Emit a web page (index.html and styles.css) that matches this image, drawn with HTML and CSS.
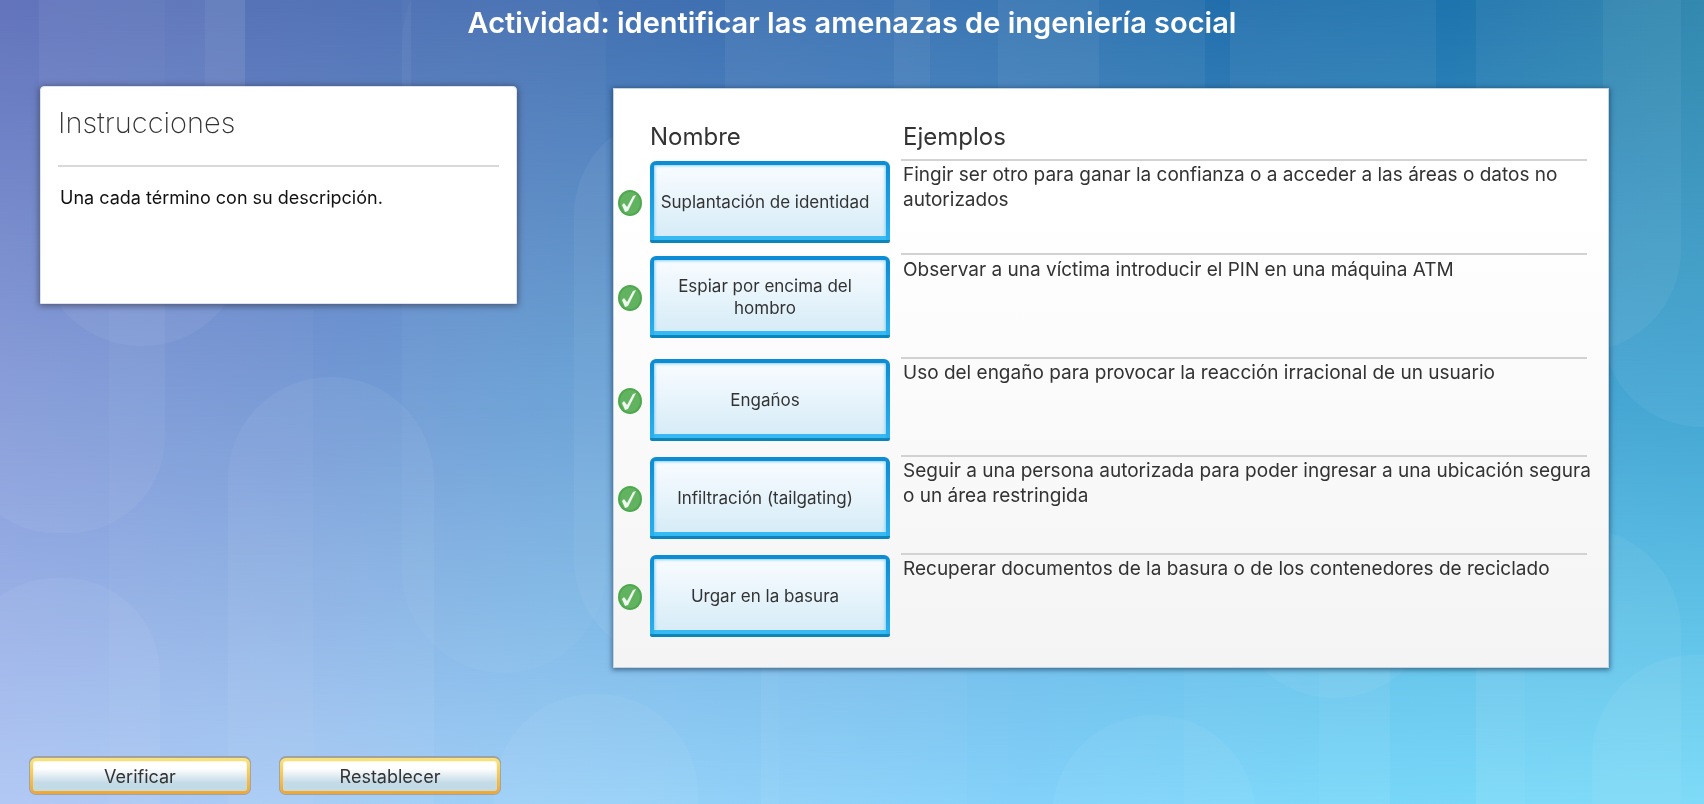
FILE: index.html
```html
<!DOCTYPE html>
<html lang="es">
<head>
<meta charset="utf-8">
<title>Actividad: identificar las amenazas de ingeniería social</title>
<link rel="stylesheet" href="styles.css">
</head>
<body>
<svg class="backdrop" viewBox="0 0 1704 804" preserveAspectRatio="none" aria-hidden="true">
  <defs>
    <linearGradient id="top"><stop offset="0" stop-color="#5b6db9"/><stop offset=".33" stop-color="#4671b2"/><stop offset=".5" stop-color="#386fb2"/><stop offset=".72" stop-color="#226eac"/><stop offset=".85" stop-color="#1e74ae"/><stop offset="1" stop-color="#2983ab"/></linearGradient>
    <linearGradient id="mid"><stop offset="0" stop-color="#849ad8"/><stop offset=".17" stop-color="#7699d5"/><stop offset=".33" stop-color="#6aa2d6"/><stop offset="1" stop-color="#44a7d3"/></linearGradient>
    <linearGradient id="low"><stop offset="0" stop-color="#aec6f4"/><stop offset=".17" stop-color="#a6cbf5"/><stop offset=".33" stop-color="#9ad0f7"/><stop offset=".6" stop-color="#83d1fa"/><stop offset=".78" stop-color="#78d7f9"/><stop offset="1" stop-color="#78d9f8"/></linearGradient>
    <linearGradient id="fadeA" x2="0" y2="1"><stop offset="0" stop-color="#fff" stop-opacity="0"/><stop offset=".5" stop-color="#fff"/></linearGradient>
    <linearGradient id="fadeB" x2="0" y2="1"><stop offset=".5" stop-color="#fff" stop-opacity="0"/><stop offset="1" stop-color="#fff"/></linearGradient>
    <mask id="maskA"><rect width="1704" height="804" fill="url(#fadeA)"/></mask>
    <mask id="maskB"><rect width="1704" height="804" fill="url(#fadeB)"/></mask>
  </defs>
  <rect width="1704" height="804" fill="url(#top)"/>
  <rect width="1704" height="804" fill="url(#mid)" mask="url(#maskA)"/>
  <rect width="1704" height="804" fill="url(#low)" mask="url(#maskB)"/>
  <g fill="#fff" fill-opacity=".05">
    <rect x="39" y="-200" width="206" height="546" rx="102"/>
    <rect x="-40" y="-200" width="205" height="733" rx="96"/>
    <rect x="205" y="-5" width="40" height="200"/>
    <rect x="-40" y="578" width="200" height="400" rx="96"/>
    <rect x="228" y="377" width="206" height="600" rx="102"/>
    <rect x="402" y="-5" width="9" height="200"/>
    <rect x="494" y="694" width="204" height="300" rx="100"/>
    <rect x="574" y="115" width="204" height="545" rx="100"/>
    <rect x="725" y="-5" width="480" height="200"/>
    <rect x="894" y="-5" width="36" height="200"/>
    <rect x="998" y="-5" width="101" height="200"/>
    <rect x="1230" y="-5" width="206" height="200"/>
    <rect x="1476" y="-200" width="205" height="552" rx="102"/>
    <rect x="1603" y="-200" width="200" height="627" rx="98"/>
    <rect x="1476" y="528" width="205" height="400" rx="102"/>
    <rect x="1592" y="655" width="210" height="400" rx="102"/>
    <rect x="1052" y="715" width="204" height="300" rx="102"/>
    <rect x="1232" y="400" width="204" height="298" rx="102"/>
  </g>
  <g fill="#fff" fill-opacity=".03">
    <rect x="109" y="310" width="204" height="500"/>
    <rect x="165" y="-5" width="237" height="200"/>
    <rect x="402" y="-60" width="204" height="733" rx="102"/>
    <rect x="761" y="600" width="18" height="210"/>
    <rect x="761" y="600" width="206" height="210"/>
    <rect x="1184" y="660" width="206" height="150"/>
    <rect x="1319" y="660" width="71" height="150"/>
    <rect x="1476" y="660" width="49" height="150"/>
  </g>
</svg>

<h1 class="title">Actividad: identificar las amenazas de ingeniería social</h1>

<main class="activity">
  <aside class="side">
    <section class="card">
      <h2 class="card-title">Instrucciones</h2>
      <p class="card-text">Una cada término con su descripción.</p>
    </section>
    <div class="actions">
      <button class="action" type="button">Verificar</button>
      <button class="action" type="button">Restablecer</button>
    </div>
  </aside>

  <section class="panel">
    <svg class="symbols" aria-hidden="true">
      <symbol id="check" viewBox="0 0 24 28">
        <ellipse cx="12" cy="14" rx="12" ry="13" fill="#4fa84f"/>
        <ellipse cx="12" cy="14" rx="10" ry="11" fill="#62b360"/>
        <path d="M4 16l2-2 3 4 6-11 3-1-8 16-3 1z" fill="#eef8ee"/>
      </symbol>
    </svg>
    <table class="matches">
      <thead>
        <tr><th class="mark"></th><th class="name" scope="col">Nombre</th><th class="example" scope="col">Ejemplos</th></tr>
      </thead>
      <tbody>
        <tr class="row-short">
          <td class="mark"><svg class="check" role="img" aria-label="Correcto"><use href="#check"/></svg></td>
          <td class="name"><button class="term" type="button">Suplantación de identidad</button></td>
          <td class="example"><p>Fingir ser otro para ganar la confianza o a acceder a las áreas o datos no autorizados</p></td>
        </tr>
        <tr class="row-tall">
          <td class="mark"><svg class="check" role="img" aria-label="Correcto"><use href="#check"/></svg></td>
          <td class="name"><button class="term" type="button">Espiar por encima del hombro</button></td>
          <td class="example"><p>Observar a una víctima introducir el PIN en una máquina ATM</p></td>
        </tr>
        <tr>
          <td class="mark"><svg class="check" role="img" aria-label="Correcto"><use href="#check"/></svg></td>
          <td class="name"><button class="term" type="button">Engaños</button></td>
          <td class="example"><p>Uso del engaño para provocar la reacción irracional de un usuario</p></td>
        </tr>
        <tr>
          <td class="mark"><svg class="check" role="img" aria-label="Correcto"><use href="#check"/></svg></td>
          <td class="name"><button class="term" type="button">Infiltración (tailgating)</button></td>
          <td class="example"><p>Seguir a una persona autorizada para poder ingresar a una ubicación segura o un área restringida</p></td>
        </tr>
        <tr>
          <td class="mark"><svg class="check" role="img" aria-label="Correcto"><use href="#check"/></svg></td>
          <td class="name"><button class="term" type="button">Urgar en la basura</button></td>
          <td class="example"><p>Recuperar documentos de la basura o de los contenedores de reciclado</p></td>
        </tr>
      </tbody>
    </table>
  </section>
</main>
</body>
</html>
```
FILE: styles.css
```css
* { box-sizing: border-box; }

body {
  margin: 0;
  min-height: 100vh;
  display: flex;
  flex-direction: column;
  font-family: Inter, "Liberation Sans", sans-serif;
  color: #333;
}

h1, h2, p { margin: 0; }

.backdrop {
  position: fixed;
  inset: 0;
  width: 100%;
  height: 100%;
  z-index: -1;
}

.title {
  padding: 3px 0 43px;
  font-size: 29px;
  line-height: 40px;
  font-weight: 600;
  text-align: center;
  color: #fff;
}

.activity {
  flex: 1;
  display: grid;
  grid-template-columns: 477fr 996fr;
  gap: 96px;
  padding: 0 95px 10px 40px;
}

.side {
  display: flex;
  flex-direction: column;
  justify-content: space-between;
}

.card {
  min-height: 218px;
  padding: 12px 17px;
  background: #fff;
  border: 1px solid #dde2ee;
  border-radius: 4px 4px 0 0;
  box-shadow: 0 1px 6px 1px rgba(50, 50, 65, .6);
}

.card-title {
  padding-bottom: 18px;
  border-bottom: 2px solid #d9d9d9;
  font-size: 29px;
  line-height: 48px;
  font-weight: 200;
}

.card-text {
  padding: 18px 0 0 2px;
  font-size: 18px;
  line-height: 25px;
  color: #111;
}

.actions {
  display: flex;
  gap: 30px;
  margin: 0 17px 0 -10px;
}

.action {
  flex: 1;
  height: 36px;
  padding: 0;
  border: 3px solid transparent;
  border-radius: 6px;
  background:
    linear-gradient(#fff 0%, #fff 25%, #c4dbe7 72%, #bfdbe6 100%) padding-box,
    linear-gradient(#f8e57e, #eca63b) border-box;
  box-shadow: 0 0 0 1px #a3a3a0, 0 -1px 0 1px #a0a0a0, inset 0 0 2px #f7dd8c;
  font: inherit;
  font-size: 18px;
  color: #333;
}

.panel {
  align-self: start;
  margin-top: 2px;
  padding: 28px 21px 16px 4px;
  background: linear-gradient(#fff 20%, #f4f4f4);
  border: 1px solid #c3d5e2;
  box-shadow: 0 1px 5px 1px rgba(20, 50, 80, .6);
}

.symbols { display: none; }

.matches {
  width: 100%;
  border-spacing: 0;
  table-layout: fixed;
}

.matches th, .matches td {
  padding: 0;
  text-align: left;
  vertical-align: top;
}

.matches th {
  height: 42px;
  font-size: 24px;
  line-height: 40px;
  font-weight: 400;
}

.matches td { height: 98px; }
.matches .row-short td { height: 94px; }
.matches .row-tall td { height: 104px; padding-top: 1px; }

.matches .mark { width: 32px; }
.matches .name { width: 251px; }
.matches .example { padding-left: 2px; }
.matches td.example {
  border-top: 2px solid #d2d2d2;
  font-size: 19px;
  line-height: 25px;
}

.example p {
  margin-right: -14px;
  padding-top: 1px;
}

.check {
  display: block;
  width: 24px;
  height: 28px;
  margin-top: 30px;
}

.term {
  width: 240px;
  height: 82px;
  margin-top: 2px;
  padding: 0 16px 2px 6px;
  border: 4px solid transparent;
  border-bottom-width: 3px;
  border-radius: 6px 6px 2px 2px;
  background:
    linear-gradient(#f9fcff, #d4ebf7) padding-box,
    linear-gradient(#0b8cd3, #29b0ee 96%, #0b84b9 97%) border-box;
  box-shadow: inset 0 -4px 0 #37b9f3, inset 0 0 3px 1px #8cd0f0;
  font: inherit;
  font-size: 17px;
  line-height: 22px;
  color: #333;
}
```
